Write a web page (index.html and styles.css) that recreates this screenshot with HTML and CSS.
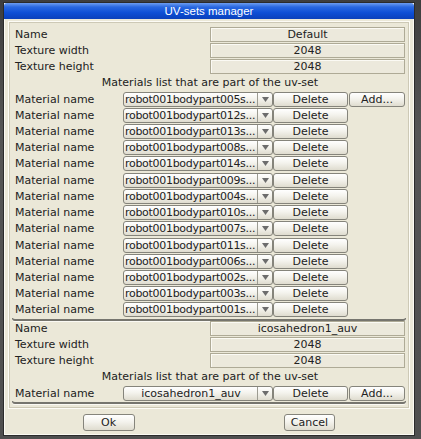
FILE: index.html
```html
<!DOCTYPE html>
<html>
<head>
<meta charset="utf-8">
<title>UV-sets manager</title>
<link rel="stylesheet" href="styles.css">
</head>
<body>
<div class="window">
  <div class="titlebar">UV-sets manager</div>
  <div class="client">
    <div class="panel">
      <div class="section">
        <div class="info"><span class="label">Name</span><span class="value">Default</span></div>
        <div class="info"><span class="label">Texture width</span><span class="value">2048</span></div>
        <div class="info"><span class="label">Texture height</span><span class="value">2048</span></div>
        <div class="header">Materials list that are part of the uv-set</div>
        <div class="materials many">
          <div class="mat"><span class="label">Material name</span><div class="combo"><span class="combo-text">robot001bodypart005s...</span><span class="combo-arrow"><svg width="7" height="5" viewBox="0 0 7 5"><polygon points="0,0 7,0 3.5,5" fill="#6c6c6c"/></svg></span></div><button class="btn del">Delete</button><button class="btn add">Add...</button></div>
          <div class="mat"><span class="label">Material name</span><div class="combo"><span class="combo-text">robot001bodypart012s...</span><span class="combo-arrow"><svg width="7" height="5" viewBox="0 0 7 5"><polygon points="0,0 7,0 3.5,5" fill="#6c6c6c"/></svg></span></div><button class="btn del">Delete</button></div>
          <div class="mat"><span class="label">Material name</span><div class="combo"><span class="combo-text">robot001bodypart013s...</span><span class="combo-arrow"><svg width="7" height="5" viewBox="0 0 7 5"><polygon points="0,0 7,0 3.5,5" fill="#6c6c6c"/></svg></span></div><button class="btn del">Delete</button></div>
          <div class="mat"><span class="label">Material name</span><div class="combo"><span class="combo-text">robot001bodypart008s...</span><span class="combo-arrow"><svg width="7" height="5" viewBox="0 0 7 5"><polygon points="0,0 7,0 3.5,5" fill="#6c6c6c"/></svg></span></div><button class="btn del">Delete</button></div>
          <div class="mat"><span class="label">Material name</span><div class="combo"><span class="combo-text">robot001bodypart014s...</span><span class="combo-arrow"><svg width="7" height="5" viewBox="0 0 7 5"><polygon points="0,0 7,0 3.5,5" fill="#6c6c6c"/></svg></span></div><button class="btn del">Delete</button></div>
          <div class="mat"><span class="label">Material name</span><div class="combo"><span class="combo-text">robot001bodypart009s...</span><span class="combo-arrow"><svg width="7" height="5" viewBox="0 0 7 5"><polygon points="0,0 7,0 3.5,5" fill="#6c6c6c"/></svg></span></div><button class="btn del">Delete</button></div>
          <div class="mat"><span class="label">Material name</span><div class="combo"><span class="combo-text">robot001bodypart004s...</span><span class="combo-arrow"><svg width="7" height="5" viewBox="0 0 7 5"><polygon points="0,0 7,0 3.5,5" fill="#6c6c6c"/></svg></span></div><button class="btn del">Delete</button></div>
          <div class="mat"><span class="label">Material name</span><div class="combo"><span class="combo-text">robot001bodypart010s...</span><span class="combo-arrow"><svg width="7" height="5" viewBox="0 0 7 5"><polygon points="0,0 7,0 3.5,5" fill="#6c6c6c"/></svg></span></div><button class="btn del">Delete</button></div>
          <div class="mat"><span class="label">Material name</span><div class="combo"><span class="combo-text">robot001bodypart007s...</span><span class="combo-arrow"><svg width="7" height="5" viewBox="0 0 7 5"><polygon points="0,0 7,0 3.5,5" fill="#6c6c6c"/></svg></span></div><button class="btn del">Delete</button></div>
          <div class="mat"><span class="label">Material name</span><div class="combo"><span class="combo-text">robot001bodypart011s...</span><span class="combo-arrow"><svg width="7" height="5" viewBox="0 0 7 5"><polygon points="0,0 7,0 3.5,5" fill="#6c6c6c"/></svg></span></div><button class="btn del">Delete</button></div>
          <div class="mat"><span class="label">Material name</span><div class="combo"><span class="combo-text">robot001bodypart006s...</span><span class="combo-arrow"><svg width="7" height="5" viewBox="0 0 7 5"><polygon points="0,0 7,0 3.5,5" fill="#6c6c6c"/></svg></span></div><button class="btn del">Delete</button></div>
          <div class="mat"><span class="label">Material name</span><div class="combo"><span class="combo-text">robot001bodypart002s...</span><span class="combo-arrow"><svg width="7" height="5" viewBox="0 0 7 5"><polygon points="0,0 7,0 3.5,5" fill="#6c6c6c"/></svg></span></div><button class="btn del">Delete</button></div>
          <div class="mat"><span class="label">Material name</span><div class="combo"><span class="combo-text">robot001bodypart003s...</span><span class="combo-arrow"><svg width="7" height="5" viewBox="0 0 7 5"><polygon points="0,0 7,0 3.5,5" fill="#6c6c6c"/></svg></span></div><button class="btn del">Delete</button></div>
          <div class="mat"><span class="label">Material name</span><div class="combo"><span class="combo-text">robot001bodypart001s...</span><span class="combo-arrow"><svg width="7" height="5" viewBox="0 0 7 5"><polygon points="0,0 7,0 3.5,5" fill="#6c6c6c"/></svg></span></div><button class="btn del">Delete</button></div>
        </div>
        <div class="sep"></div>
      </div>
      <div class="section">
        <div class="info"><span class="label">Name</span><span class="value">icosahedron1_auv</span></div>
        <div class="info"><span class="label">Texture width</span><span class="value">2048</span></div>
        <div class="info"><span class="label">Texture height</span><span class="value">2048</span></div>
        <div class="header">Materials list that are part of the uv-set</div>
        <div class="materials">
          <div class="mat"><span class="label">Material name</span><div class="combo"><span class="combo-text centered">icosahedron1_auv</span><span class="combo-arrow"><svg width="7" height="5" viewBox="0 0 7 5"><polygon points="0,0 7,0 3.5,5" fill="#6c6c6c"/></svg></span></div><button class="btn del">Delete</button><button class="btn add">Add...</button></div>
        </div>
        <div class="sep"></div>
      </div>
    </div>
    <div class="buttons">
      <button class="btn dlg ok">Ok</button>
      <button class="btn dlg cancel">Cancel</button>
    </div>
  </div>
</div>
</body>
</html>
```

FILE: styles.css
```css
html, body {
  margin: 0;
  padding: 0;
}

body {
  width: 421px;
  height: 439px;
  overflow: hidden;
  background: linear-gradient(#3e3e3e, #555555 30%, #4f4f4f);
  font-family: "DejaVu Sans", sans-serif;
  font-size: 11px;
  color: #222;
}

.window {
  margin: 2px 0 0 3px;
  width: 410px;
  border: 1px solid #2b2b2b;
  background: #ebe8d8;
  box-shadow: inset 1px 0 0 #fbfaf3, inset -1px 0 0 #fbfaf3, inset 0 -1px 0 #fbfaf3;
}

.titlebar {
  height: 16px;
  line-height: 16px;
  text-align: center;
  color: #fff;
  font-family: "Liberation Sans", sans-serif;
  font-size: 11.5px;
  background: linear-gradient(#6d9df0, #2a68e0 25%, #0e4fd6 60%, #0a40bb);
  border-radius: 3px 3px 0 0;
}

.client {
  padding: 2px 4px 4px;
}

.panel {
  border: 1px solid #fdfcf6;
  box-shadow: inset 0 0 0 1px #cdc9b6;
  padding: 5px 4px 4px 6px;
}

.info {
  display: grid;
  grid-template-columns: 1fr 195px;
  height: 16px;
  align-items: start;
}

.label {
  line-height: 15px;
  white-space: nowrap;
}

.value {
  height: 13px;
  line-height: 13px;
  border: 1px solid #aeaa96;
  box-shadow: inset 1px 1px 0 #fbfaf4;
  background: #ece9dc;
  text-align: center;
  white-space: nowrap;
}

.header {
  height: 16px;
  line-height: 16px;
  text-align: center;
  white-space: nowrap;
}

.materials {
  display: grid;
  grid-template-rows: 16px;
}

.materials.many {
  grid-template-rows: repeat(14, 1fr);
  height: 227px;
}

.mat {
  display: grid;
  grid-template-columns: 108px 150px 76px 56px;
  align-items: center;
}

.combo {
  display: flex;
  height: 15px;
  box-sizing: border-box;
  border: 1px solid #85847b;
  border-radius: 3px;
  background: linear-gradient(#ffffff, #f4f3ed 45%, #dfdccf);
}

.combo-text {
  flex: 1;
  padding-left: 1px;
  overflow: hidden;
  white-space: nowrap;
  letter-spacing: -0.3px;
  line-height: 13px;
}

.combo-text.centered {
  text-align: center;
  letter-spacing: 0;
}

.combo-arrow {
  width: 14px;
  border-left: 1px solid #9c9b91;
  display: flex;
  align-items: center;
  justify-content: center;
}

.btn {
  font-family: "DejaVu Sans", sans-serif;
  font-size: 11px;
  color: #222;
  height: 15px;
  box-sizing: border-box;
  padding: 0;
  line-height: 13px;
  border: 1px solid #85847b;
  border-radius: 3px;
  background: linear-gradient(#ffffff, #f4f3ed 45%, #dfdccf);
}

.del {
  width: 75px;
}

.add {
  width: 56px;
}

.sep {
  height: 1px;
  margin: 0 -1px 0 -3px;
  border: 1px solid #76756e;
  border-top: none;
  border-bottom-width: 2px;
  border-radius: 0 0 5px 5px;
  box-shadow: 0 1px 0 #fbfaf4;
}

.buttons {
  display: grid;
  grid-template-columns: 1fr 1fr;
  justify-items: center;
  padding-top: 5px;
}

.dlg {
  height: 17px;
  line-height: 15px;
}

.ok {
  width: 52px;
}

.cancel {
  width: 51px;
}
```
